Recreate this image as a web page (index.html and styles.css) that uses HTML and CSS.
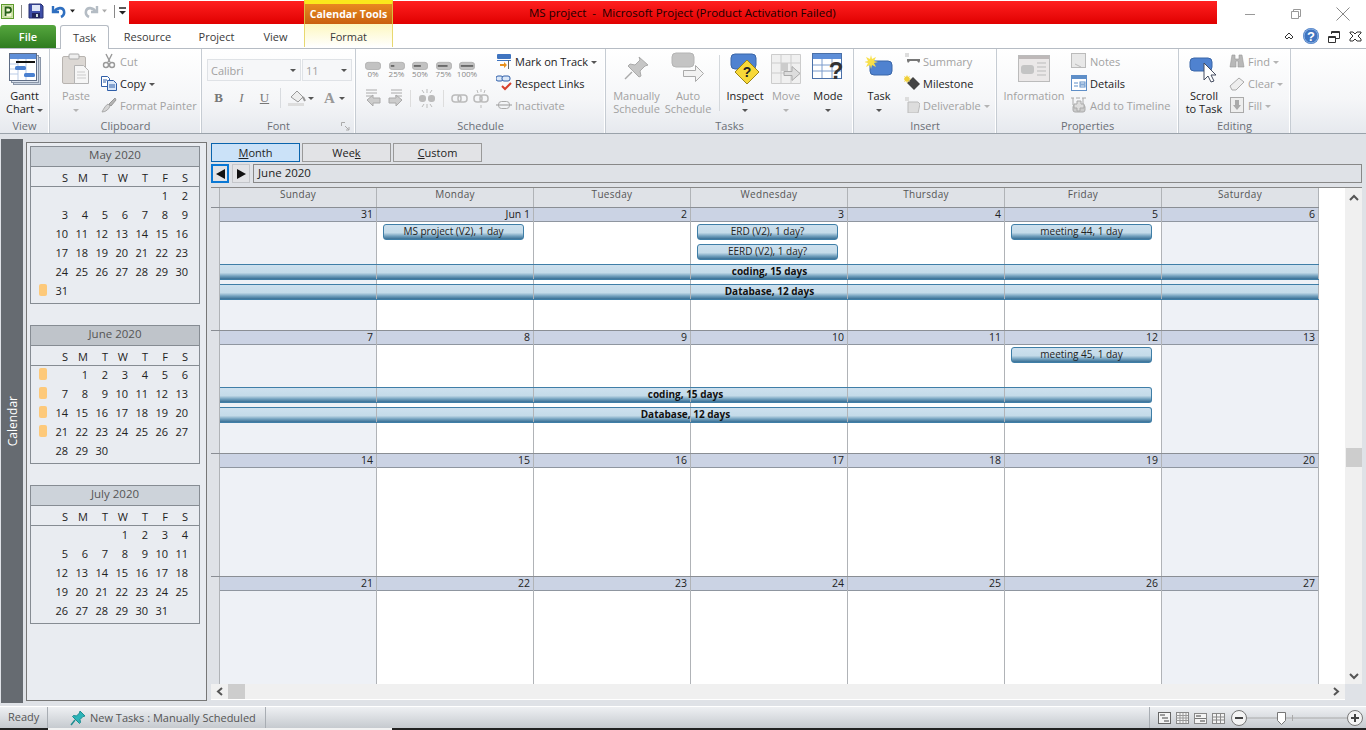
FILE: index.html
```html
<!DOCTYPE html>
<html>
<head>
  <title>MS project - Microsoft Project</title>
  <link rel="stylesheet" href="styles.css">
</head>
<body>
  <div id="titlebar">
    <div id="qat">
      <svg width="128" height="24" viewBox="0 0 128 24">
        <rect x="1.500" y="4.500" width="12" height="14" fill="#e4f0c8" stroke="#5c9a2c"/><rect x="3" y="6" width="9" height="11" fill="#f6f8d8" stroke="#7ab040" stroke-width=".5"/>
        <path d="M5.500 16V7.500h3a2.400 2.400 0 0 1 0 5h-3" fill="none" stroke="#27601a" stroke-width="1.800"/>
        <path d="M21.500 5v13" stroke="#888"/>
        <path d="M29 4h12l2 2v12H29z" fill="#3e4fa8" stroke="#28306e"/><rect x="32" y="5" width="8" height="6" fill="#dfe6f6"/><rect x="32" y="13" width="8" height="5" fill="#20245c"/><rect x="36" y="14" width="2" height="3" fill="#cdd"/>
        <path d="M53 6v6h6" fill="none" stroke="#2f6fc0" stroke-width="2.400"/><path d="M54 12c3-5 9-5 10-1 .7 3-1 5-3 6" fill="none" stroke="#2f6fc0" stroke-width="2.600"/>
        <path d="M70 9.500h5l-2.500 3z" fill="#222"/>
        <path d="M97 6v6h-6" fill="none" stroke="#b4bcc4" stroke-width="2.400"/><path d="M96 12c-3-5-9-5-10-1-.7 3 1 5 3 6" fill="none" stroke="#b4bcc4" stroke-width="2.600"/>
        <path d="M102 9.500h5l-2.500 3z" fill="#aaa"/>
        <path d="M114.500 5v13" stroke="#888"/>
        <path d="M119 8h7" stroke="#222" stroke-width="1.500"/><path d="M119 11h7l-3.500 3.500z" fill="#222"/>
      </svg>
    </div>
    <div id="redbar">
      <div class="context-head">Calendar Tools</div>
      <div class="doc-title">MS project &nbsp;-&nbsp; Microsoft Project (Product Activation Failed)</div>
    </div>
    <div id="winbtns">
      <svg width="149" height="24" viewBox="0 0 149 24">
        <path d="M28 14.500h10" stroke="#999"/>
        <path d="M74.500 11.500h7v7h-7zM76.500 11V9.500h7v7H82" fill="none" stroke="#999"/>
        <path d="M119.500 9.500l13 13M132.500 9.500l-13 13" stroke="#888" fill="none" transform="translate(0 -2)"/>
      </svg>
    </div>
  </div>

  <div id="tabs">
    <div class="tab tab-file">File</div>
    <div class="tab tab-active">Task</div>
    <div class="tab tab-resource">Resource</div>
    <div class="tab tab-project">Project</div>
    <div class="tab tab-view">View</div>
    <div class="tab tab-format">Format</div>
    <div class="tab-icons">
      <svg width="85" height="24" viewBox="0 0 85 24">
        <path d="M4 13l4-4 4 4-2 2-2-2-2 2z" fill="#fff" stroke="#333"/>
        <circle cx="30" cy="12" r="8" fill="#3f74c0"/><circle cx="30" cy="12" r="7" fill="none" stroke="#8fb4e4"/>
        <text x="30" y="16.500" class="help-mark">?</text>
        <path d="M47.500 12.500h7v6h-7zM50.500 10V7.500h8v7H55" fill="none" stroke="#333"/><path d="M47.500 13.500h7M50.500 8.500h8" stroke="#333"/>
        <path d="M69 8h3l2 2 2-2h4v1l-3 3 3 3v2h-4l-2-2-2 2h-3v-2l3-3-3-3z" fill="#fff" stroke="#333"/>
      </svg>
    </div>
  </div>

  <div id="ribbon">
    <div class="group g-view">
      <div class="tools">
        <div class="big w49">
          <svg class="big-icon" width="34" height="34" viewBox="0 0 34 34">
            <rect x="5.500" y="5.500" width="27" height="27" fill="#c8d2e0" stroke="#8a96a8"/>
            <rect x="3.500" y="3.500" width="27" height="27" fill="#dbe3ee" stroke="#8a96a8"/>
            <rect x="1.500" y="1.500" width="27" height="27" fill="#fff" stroke="#5e6c84"/>
            <rect x="2" y="2" width="26" height="5" fill="#5f8fd8"/><path d="M2 12h8M2 17h8M2 22h8M10 7v21M18 7v21" stroke="#b9cbe6"/>
            <rect x="8" y="9" width="19" height="2" fill="#111"/>
            <rect x="7" y="14" width="11" height="4" rx="1.500" fill="#4a80d0"/><rect x="16" y="21" width="11" height="4" rx="1.500" fill="#4a80d0"/>
          </svg>
          <div class="big-label">Gantt<br>Chart <i class="caret"></i></div>
        </div>
      </div>
      <div class="group-name">View</div>
    </div>

    <div class="group g-clip">
      <div class="tools">
        <div class="big w52 off">
          <svg class="big-icon" width="30" height="34" viewBox="0 0 30 34">
            <rect x="1.500" y="4.500" width="23" height="27" rx="1.500" fill="#dcd8d4" stroke="#b8b4b0"/>
            <rect x="8" y="2" width="10" height="5" rx="1" fill="#eee" stroke="#aaa"/>
            <path d="M13.500 13.500h9l5 5v13h-14z" fill="#f6f6f6" stroke="#b4b4b4"/>
            <path d="M16 20h8M16 23h9M16 26h9" stroke="#ccc"/>
          </svg>
          <div class="big-label">Paste<br><i class="caret"></i></div>
        </div>
        <div class="small-col clip-col">
          <div class="small off"><svg width="16" height="16" viewBox="0 0 16 16"><path d="M5 1l4 8M11 1L7 9" stroke="#999" stroke-width="1.400"/><circle cx="5" cy="12" r="2.500" fill="none" stroke="#999" stroke-width="1.400"/><circle cx="11" cy="12" r="2.500" fill="none" stroke="#999" stroke-width="1.400"/></svg><span>Cut</span></div>
          <div class="small"><svg width="16" height="16" viewBox="0 0 16 16"><path d="M.5 1.500h6l2 2v8h-8z" fill="#fff" stroke="#2f5ea8"/><path d="M6.500 5.500h6l3 3v7h-9z" fill="#dbe8f8" stroke="#2f5ea8"/><path d="M2 5h4M2 7h3M8 10h6M8 12h6" stroke="#2f5ea8"/></svg><span>Copy <i class="caret"></i></span></div>
          <div class="small off"><svg width="16" height="16" viewBox="0 0 16 16"><path d="M1 15c4 0 7-3 8-6L7 7c-2 1-4 4-6 8z" fill="#d4d4d4" stroke="#aaa"/><path d="M8 7l6-6 1 2-5 6z" fill="#b4b4b4" stroke="#999"/></svg><span>Format Painter</span></div>
        </div>
      </div>
      <div class="group-name">Clipboard</div>
    </div>

    <div class="group g-font">
      <div class="tools font-tools">
        <div class="combos">
          <div class="combo c-name"><span>Calibri</span><i class="caret"></i></div>
          <div class="combo c-size"><span>11</span><i class="caret"></i></div>
        </div>
        <div class="font-btns">
          <b class="fb">B</b><em class="fb">I</em><u class="fb">U</u>
          <span class="vsep"></span>
          <svg width="24" height="18" viewBox="0 0 24 18"><path d="M4 8l6-6 6 6-5 5z" fill="#eee" stroke="#999"/><path d="M16 8l2 4" stroke="#999" stroke-width="2"/><rect x="1" y="14" width="16" height="3" fill="#ddd"/></svg>
          <i class="caret cf"></i>
          <span class="font-a">A</span><i class="caret"></i>
        </div>
      </div>
      <div class="group-name">Font
        <svg class="launcher" width="9" height="9" viewBox="0 0 9 9"><path d="M.5 4V.5H4M4 4l4 4M8 5v3H5" fill="none" stroke="#aaa"/></svg>
      </div>
    </div>

    <div class="group g-sched">
      <div class="tools">
        <div class="sched-left">
          <div class="pills">
            <div class="pill"><svg width="16" height="9" viewBox="0 0 18 10" preserveAspectRatio="none"><rect x=".5" y="1.500" width="17" height="8" rx="3" fill="#c2c2c2" stroke="#b0b0b0"/></svg><span>0%</span></div>
            <div class="pill"><svg width="16" height="9" viewBox="0 0 18 10" preserveAspectRatio="none"><rect x=".5" y="1.500" width="17" height="8" rx="3" fill="#c2c2c2" stroke="#b0b0b0"/><path d="M2 5.500h4" stroke="#666" stroke-width="2"/></svg><span>25%</span></div>
            <div class="pill"><svg width="16" height="9" viewBox="0 0 18 10" preserveAspectRatio="none"><rect x=".5" y="1.500" width="17" height="8" rx="3" fill="#c2c2c2" stroke="#b0b0b0"/><path d="M2 5.500h8" stroke="#666" stroke-width="2"/></svg><span>50%</span></div>
            <div class="pill"><svg width="16" height="9" viewBox="0 0 18 10" preserveAspectRatio="none"><rect x=".5" y="1.500" width="17" height="8" rx="3" fill="#c2c2c2" stroke="#b0b0b0"/><path d="M2 5.500h11" stroke="#666" stroke-width="2"/></svg><span>75%</span></div>
            <div class="pill"><svg width="16" height="9" viewBox="0 0 18 10" preserveAspectRatio="none"><rect x=".5" y="1.500" width="17" height="8" rx="3" fill="#c2c2c2" stroke="#b0b0b0"/><path d="M2 5.500h14" stroke="#666" stroke-width="2"/></svg><span>100%</span></div>
          </div>
          <div class="sched-row">
            <svg width="124" height="20" viewBox="0 0 124 20">
              <path d="M1 1h11M1 4h11M1 7h7" stroke="#aaa"/><path d="M2 11l6-5v3h7v5H8v3z" fill="#ccc" stroke="#aaa"/>
              <path d="M26 1h11M26 4h11M30 7h7" stroke="#aaa"/><path d="M37 11l-6-5v3h-7v5h7v3z" fill="#ccc" stroke="#aaa"/>
              <path d="M45.500 1v17" stroke="#ddd"/>
              <rect x="54" y="6" width="7" height="7" rx="3" fill="#bbb"/><rect x="63" y="6" width="7" height="7" rx="3" fill="#bbb"/><path d="M57 1l2 3M67 1l-2 3M57 18l2-3M67 18l-2-3M62 0v4M62 15v4" stroke="#bbb"/>
              <path d="M78.500 1v17" stroke="#ddd"/>
              <rect x="87" y="6" width="9" height="7" rx="3" fill="none" stroke="#bbb" stroke-width="1.500"/><rect x="93" y="6" width="9" height="7" rx="3" fill="none" stroke="#bbb" stroke-width="1.500"/>
              <rect x="109" y="6" width="8" height="7" rx="3" fill="none" stroke="#bbb" stroke-width="1.500"/><rect x="115" y="6" width="8" height="7" rx="3" fill="none" stroke="#bbb" stroke-width="1.500"/><path d="M116 0v3M112 1l1 3M120 1l-1 3M116 19v-3" stroke="#bbb"/>
            </svg>
          </div>
        </div>
        <div class="small-col sched-col">
          <div class="small"><svg width="16" height="16" viewBox="0 0 16 16"><rect x="1" y="1" width="14" height="5" rx="1" fill="#3f74c0"/><path d="M1 7.500h14" stroke="#3f74c0"/><path d="M4 11h4V9l3 3-3 3v-2H4z" fill="#e8901c"/><path d="M12.500 7v9" stroke="#666"/></svg><span>Mark on Track <i class="caret"></i></span></div>
          <div class="small"><svg width="16" height="16" viewBox="0 0 16 16"><rect x="0" y="1" width="7" height="5" rx="2" fill="#dbe8f8" stroke="#2f5ea8"/><rect x="6" y="1" width="8" height="5" rx="2" fill="#dbe8f8" stroke="#2f5ea8"/><path d="M6 11l3 3 6-6" fill="none" stroke="#d8402c" stroke-width="2"/></svg><span>Respect Links</span></div>
          <div class="small off"><svg width="16" height="16" viewBox="0 0 16 16"><rect x="2.500" y="4.500" width="11" height="7" rx="3" fill="none" stroke="#aaa"/><path d="M0 8h16" stroke="#999"/></svg><span>Inactivate</span></div>
        </div>
      </div>
      <div class="group-name">Schedule</div>
    </div>

    <div class="group g-tasks">
      <div class="tools">
        <div class="big w51 off">
          <svg class="big-icon" width="28" height="28" viewBox="0 0 28 28"><path d="M16 2l9 8-3 1-5 5 1 5-2 1-11-11 2-2 5 1 5-5z" fill="#c6c6c6" stroke="#aaa"/><path d="M9 17l-7 7" stroke="#aaa" stroke-width="1.500"/></svg>
          <div class="big-label">Manually<br>Schedule</div>
        </div>
        <div class="big w52 off">
          <svg class="big-icon" width="34" height="34" viewBox="0 0 34 34"><rect x="1" y="1" width="22" height="14" rx="4" fill="#c4c4c4" stroke="#b4b4b4"/><path d="M12.500 18.500h12v-5l8 8-8 8v-5h-12z" fill="#f2f2f2" stroke="#aaa"/></svg>
          <div class="big-label">Auto<br>Schedule</div>
        </div>
        <span class="big-sep"></span>
        <div class="big w50">
          <svg class="big-icon" width="32" height="34" viewBox="0 0 32 34"><rect x="2" y="2" width="25" height="15" rx="4" fill="#4f82d0" stroke="#3a66a8"/><path d="M18 8l12 12-12 12L6 20z" fill="#f8d838" stroke="#9c8418"/><text x="18" y="25" class="warn-mark">?</text></svg>
          <div class="big-label">Inspect<br><i class="caret"></i></div>
        </div>
        <div class="big w32 off">
          <svg class="big-icon" width="32" height="32" viewBox="0 0 32 32"><path d="M1.500 1.500h29v29h-29zM1.500 10h29M1.500 20h29M11 1.500v29M21 1.500v29" fill="#f0f0f0" stroke="#ccc"/><rect x="11" y="10" width="7" height="8" fill="#ccc"/><path d="M14 18.500h8v-5l8 7-8 7v-5h-8z" fill="#ddd" stroke="#aaa"/></svg>
          <div class="big-label">Move<br><i class="caret"></i></div>
        </div>
        <div class="big w52">
          <svg class="big-icon" width="32" height="34" viewBox="0 0 32 34"><rect x=".5" y="1.500" width="29" height="25" fill="#fff" stroke="#4a70a8"/><rect x="1" y="2" width="28" height="5" fill="#5f8fd8"/><path d="M1 13h28M1 19h28M10 7v19M20 7v19" stroke="#7c9ccc"/><text x="24" y="27" class="mode-mark">?</text></svg>
          <div class="big-label">Mode<br><i class="caret"></i></div>
        </div>
      </div>
      <div class="group-name">Tasks</div>
    </div>

    <div class="group g-insert">
      <div class="tools">
        <div class="big w50">
          <svg class="big-icon" width="28" height="28" viewBox="0 0 28 28"><rect x="5" y="6" width="22" height="14" rx="4" fill="#4f82d0" stroke="#3a66a8"/><path d="M6 0l1 4 4-2-2 4 4 1-4 1 2 4-4-2-1 4-1-4-4 2 2-4-4-1 4-1-2-4 4 2z" fill="#f8e048"/></svg>
          <div class="big-label">Task<br><i class="caret"></i></div>
        </div>
        <div class="small-col">
          <div class="small off"><svg width="16" height="16" viewBox="0 0 16 16"><path d="M1 0h4v4H1z" fill="#ddd"/><path d="M3 6h13v2l-1 2-2-2H6l-2 2-1-2z" fill="#777"/></svg><span>Summary</span></div>
          <div class="small"><svg width="16" height="16" viewBox="0 0 16 16"><path d="M9 2l7 7-6 6-7-7z" fill="#444"/><path d="M3 0l1 2 2-1-1 2 2 1-2 1 1 2-2-1-1 2-1-2-2 1 1-2-2-1 2-1-1-2 2 1z" fill="#f0d038"/></svg><span>Milestone</span></div>
          <div class="small off"><svg width="16" height="16" viewBox="0 0 16 16"><path d="M4 5h10l2 2-2 9H4z" fill="#ddd" stroke="#bbb"/><path d="M1 0h4v4H1z" fill="#ddd"/></svg><span>Deliverable <i class="caret"></i></span></div>
        </div>
      </div>
      <div class="group-name">Insert</div>
    </div>

    <div class="group g-props">
      <div class="tools">
        <div class="big w74 off">
          <svg class="big-icon" width="32" height="28" viewBox="0 0 32 28"><rect x=".5" y=".5" width="31" height="26" fill="#ebe8e8" stroke="#bbb"/><rect x="1" y="1" width="30" height="3" fill="#bdb8b8"/><rect x="3" y="10" width="13" height="9" rx="3" fill="#c4c4c4"/><path d="M19 8h9M19 12h9M19 16h9M19 20h9" stroke="#bbb"/></svg>
          <div class="big-label">Information</div>
        </div>
        <div class="small-col">
          <div class="small off"><svg width="16" height="16" viewBox="0 0 16 16"><rect x=".5" y=".5" width="14" height="14" fill="#e8e8e8" stroke="#bbb"/><path d="M4 11l6 3" stroke="#bbb"/></svg><span>Notes</span></div>
          <div class="small"><svg width="16" height="16" viewBox="0 0 16 16"><rect x=".5" y=".5" width="15" height="15" fill="#fff" stroke="#5f8fc8"/><rect x="1" y="1" width="14" height="3" fill="#5f8fc8"/><path d="M3 8h4M3 11h4" stroke="#5f8fc8"/><rect x="9" y="7" width="5" height="2" fill="none" stroke="#5f8fc8"/><rect x="9" y="10" width="5" height="2" fill="none" stroke="#5f8fc8"/></svg><span>Details</span></div>
          <div class="small off"><svg width="16" height="16" viewBox="0 0 16 16"><path d="M0 1h3M5 1h4M11 1h4M2 1v7M12 1v7" stroke="#aaa"/><rect x="2" y="8" width="12" height="7" rx="2" fill="#ccc" stroke="#aaa"/><path d="M6 4h4v3h3v4H9v3H6v-3H3V7h3z" fill="#ddd" stroke="#aaa"/></svg><span>Add to Timeline</span></div>
        </div>
      </div>
      <div class="group-name">Properties</div>
    </div>

    <div class="group g-edit">
      <div class="tools">
        <div class="big w50">
          <svg class="big-icon" width="30" height="30" viewBox="0 0 30 30"><rect x="1" y="4" width="22" height="13" rx="4" fill="#4f82d0" stroke="#3a66a8"/><path d="M15 9v17l4-4 3 6 3-1-3-6h5z" fill="#fff" stroke="#444c60"/></svg>
          <div class="big-label">Scroll<br>to Task</div>
        </div>
        <div class="small-col">
          <div class="small off"><svg width="16" height="16" viewBox="0 0 16 16"><path d="M3 2h3v4h4V2h3l2 12H9V8H7v6H1z" fill="#b8b8b8" stroke="#999" stroke-width=".6"/></svg><span>Find <i class="caret"></i></span></div>
          <div class="small off"><svg width="16" height="16" viewBox="0 0 16 16"><path d="M1 11l9-8 5 4-8 8H3z" fill="#eee" stroke="#aaa"/></svg><span>Clear <i class="caret"></i></span></div>
          <div class="small off"><svg width="16" height="16" viewBox="0 0 16 16"><rect x="1.500" y=".5" width="13" height="15" fill="#eee" stroke="#aaa"/><path d="M6 3h4v5h2l-4 5-4-5h2z" fill="#aaa"/></svg><span>Fill <i class="caret"></i></span></div>
        </div>
      </div>
      <div class="group-name">Editing</div>
    </div>
  </div>

  <div id="content">
    <div id="viewbar"><span>Calendar</span></div>

    <div id="minis">
      <div class="mini">
        <div class="mini-head">May 2020</div>
        <div class="mini-row mini-dow"><i></i><span>S</span><span>M</span><span>T</span><span>W</span><span>T</span><span>F</span><span>S</span></div>
        <div class="mini-body">
          <div class="mini-row"><i></i><span></span><span></span><span></span><span></span><span></span><span>1</span><span>2</span></div>
          <div class="mini-row"><i></i><span>3</span><span>4</span><span>5</span><span>6</span><span>7</span><span>8</span><span>9</span></div>
          <div class="mini-row"><i></i><span>10</span><span>11</span><span>12</span><span>13</span><span>14</span><span>15</span><span>16</span></div>
          <div class="mini-row"><i></i><span>17</span><span>18</span><span>19</span><span>20</span><span>21</span><span>22</span><span>23</span></div>
          <div class="mini-row"><i></i><span>24</span><span>25</span><span>26</span><span>27</span><span>28</span><span>29</span><span>30</span></div>
          <div class="mini-row"><i class="mark"></i><span>31</span></div>
        </div>
      </div>
      <div class="mini current">
        <div class="mini-head">June 2020</div>
        <div class="mini-row mini-dow"><i></i><span>S</span><span>M</span><span>T</span><span>W</span><span>T</span><span>F</span><span>S</span></div>
        <div class="mini-body">
          <div class="mini-row"><i class="mark"></i><span></span><span>1</span><span>2</span><span>3</span><span>4</span><span>5</span><span>6</span></div>
          <div class="mini-row"><i class="mark"></i><span>7</span><span>8</span><span>9</span><span>10</span><span>11</span><span>12</span><span>13</span></div>
          <div class="mini-row"><i class="mark"></i><span>14</span><span>15</span><span>16</span><span>17</span><span>18</span><span>19</span><span>20</span></div>
          <div class="mini-row"><i class="mark"></i><span>21</span><span>22</span><span>23</span><span>24</span><span>25</span><span>26</span><span>27</span></div>
          <div class="mini-row"><i></i><span>28</span><span>29</span><span>30</span></div>
        </div>
      </div>
      <div class="mini">
        <div class="mini-head">July 2020</div>
        <div class="mini-row mini-dow"><i></i><span>S</span><span>M</span><span>T</span><span>W</span><span>T</span><span>F</span><span>S</span></div>
        <div class="mini-body">
          <div class="mini-row"><i></i><span></span><span></span><span></span><span>1</span><span>2</span><span>3</span><span>4</span></div>
          <div class="mini-row"><i></i><span>5</span><span>6</span><span>7</span><span>8</span><span>9</span><span>10</span><span>11</span></div>
          <div class="mini-row"><i></i><span>12</span><span>13</span><span>14</span><span>15</span><span>16</span><span>17</span><span>18</span></div>
          <div class="mini-row"><i></i><span>19</span><span>20</span><span>21</span><span>22</span><span>23</span><span>24</span><span>25</span></div>
          <div class="mini-row"><i></i><span>26</span><span>27</span><span>28</span><span>29</span><span>30</span><span>31</span></div>
        </div>
      </div>
    </div>

    <div id="calview">
      <div id="view-btns">
        <div class="vbtn vbtn-on"><u>M</u>onth</div>
        <div class="vbtn">Wee<u>k</u></div>
        <div class="vbtn"><u>C</u>ustom</div>
      </div>
      <div id="nav">
        <div class="navbtn navbtn-focus"><i class="tri-left"></i></div>
        <div class="navbtn"><i class="tri-right"></i></div>
        <div id="nav-title">June 2020</div>
      </div>
      <div id="grid-wrap">
        <div id="grid">
          <div class="day-heads">
            <div class="corner"></div>
            <div>Sunday</div><div>Monday</div><div>Tuesday</div><div>Wednesday</div><div>Thursday</div><div>Friday</div><div>Saturday</div>
          </div>

          <div class="week-row">
            <div class="gutter"></div>
            <div class="week">
              <div class="cell c1 weekend"><div class="date">31</div></div>
              <div class="cell c2"><div class="date">Jun 1</div></div>
              <div class="cell c3"><div class="date">2</div></div>
              <div class="cell c4"><div class="date">3</div></div>
              <div class="cell c5"><div class="date">4</div></div>
              <div class="cell c6"><div class="date">5</div></div>
              <div class="cell c7 weekend"><div class="date">6</div></div>
              <div class="bar one c2 r1">MS project (V2), 1 day</div>
              <div class="bar one c4 r1">ERD (V2), 1 day?</div>
              <div class="bar one c6 r1">meeting 44, 1 day</div>
              <div class="bar one c4 r2">EERD (V2), 1 day?</div>
              <div class="bar span-all r3">coding, 15 days</div>
              <div class="bar span-all r4">Database, 12 days</div>
            </div>
          </div>

          <div class="week-row">
            <div class="gutter"></div>
            <div class="week">
              <div class="cell c1 weekend"><div class="date">7</div></div>
              <div class="cell c2"><div class="date">8</div></div>
              <div class="cell c3"><div class="date">9</div></div>
              <div class="cell c4"><div class="date">10</div></div>
              <div class="cell c5"><div class="date">11</div></div>
              <div class="cell c6"><div class="date">12</div></div>
              <div class="cell c7 weekend"><div class="date">13</div></div>
              <div class="bar one c6 r1">meeting 45, 1 day</div>
              <div class="bar span-end r3">coding, 15 days</div>
              <div class="bar span-end r4">Database, 12 days</div>
            </div>
          </div>

          <div class="week-row">
            <div class="gutter"></div>
            <div class="week">
              <div class="cell c1 weekend"><div class="date">14</div></div>
              <div class="cell c2"><div class="date">15</div></div>
              <div class="cell c3"><div class="date">16</div></div>
              <div class="cell c4"><div class="date">17</div></div>
              <div class="cell c5"><div class="date">18</div></div>
              <div class="cell c6"><div class="date">19</div></div>
              <div class="cell c7 weekend"><div class="date">20</div></div>
            </div>
          </div>

          <div class="week-row">
            <div class="gutter"></div>
            <div class="week">
              <div class="cell c1 weekend"><div class="date">21</div></div>
              <div class="cell c2"><div class="date">22</div></div>
              <div class="cell c3"><div class="date">23</div></div>
              <div class="cell c4"><div class="date">24</div></div>
              <div class="cell c5"><div class="date">25</div></div>
              <div class="cell c6"><div class="date">26</div></div>
              <div class="cell c7 weekend"><div class="date">27</div></div>
            </div>
          </div>
        </div>
        <div id="vscroll">
          <svg class="sb-arrow" width="16" height="16" viewBox="0 0 16 16"><path d="M4 10l4-4 4 4" fill="none" stroke="#555" stroke-width="2"/></svg>
          <div class="v-thumb"></div>
          <svg class="sb-arrow sb-end" width="16" height="16" viewBox="0 0 16 16"><path d="M4 6l4 4 4-4" fill="none" stroke="#555" stroke-width="2"/></svg>
        </div>
      </div>
      <div id="hscroll">
        <svg width="17" height="15" viewBox="0 0 17 15"><path d="M11 4L7 7.500l4 3.500" fill="none" stroke="#555" stroke-width="2"/></svg>
        <div class="h-thumb"></div>
        <svg class="sb-end-h" width="17" height="15" viewBox="0 0 17 15"><path d="M6 4l4 3.500L6 11" fill="none" stroke="#555" stroke-width="2"/></svg>
      </div>
    </div>
  </div>

  <div id="statusbar">
    <div class="st-ready">Ready</div>
    <div class="st-mode">
      <svg width="16" height="16" viewBox="0 0 16 16"><path d="M10 1l5 5-2 .5-3 3 .5 3-1 1-7-7 1-1 3 .5 3-3z" fill="#2cb4b8" stroke="#1c8c90"/><path d="M5 10l-4 5" stroke="#1c8c90" stroke-width="1.500"/></svg>
      <span>New Tasks : Manually Scheduled</span>
    </div>
    <div class="st-right">
      <svg width="80" height="16" viewBox="0 0 80 16">
        <rect x="8.500" y="2.500" width="12" height="11" fill="#f4f4f4" stroke="#666"/><path d="M10 5h5M12 8h6M14 11h5" stroke="#444"/>
        <rect x="26.500" y="2.500" width="12" height="11" fill="#f4f4f4" stroke="#888"/><path d="M26 5.500h12M26 8h12M26 10.500h12M30 3v10M33 3v10M36 3v10" stroke="#999"/>
        <rect x="44.500" y="3.500" width="12" height="10" fill="#f4f4f4" stroke="#888"/><path d="M45 8.500h11" stroke="#777"/><rect x="46" y="5" width="5" height="2" fill="#999"/><rect x="50" y="10" width="5" height="2" fill="#999"/>
        <rect x="62.500" y="3.500" width="12" height="10" fill="#f4f4f4" stroke="#888"/><path d="M63 7h11M63 10h11M66.500 4v9M70.500 4v9" stroke="#888"/>
      </svg>
      <svg width="134" height="18" viewBox="0 0 134 18">
        <circle cx="9" cy="9" r="7.500" fill="#f4f4f4" stroke="#777"/><path d="M5 9h8" stroke="#444" stroke-width="2"/>
        <path d="M17 9h100" stroke="#aaa"/><path d="M62.500 6v6" stroke="#aaa"/>
        <path d="M47.500 3.500h8v8l-4 4-4-4z" fill="#fff" stroke="#777"/>
        <circle cx="125" cy="9" r="7.500" fill="#f4f4f4" stroke="#777"/><path d="M121 9h8M125 5v8" stroke="#444" stroke-width="2"/>
      </svg>
    </div>
  </div>
  <div id="taskstrip"></div>
</body>
</html>
```
FILE: styles.css
```css
html, body {
  margin: 0;
  height: 730px;
  overflow: hidden;
}
body {
  font-family: "Open Sans", "Noto Sans", sans-serif;
  font-size: 11px;
  color: #222;
  background: #fff;
  display: flex;
  flex-direction: column;
}
i { font-style: normal; }

/* title bar */
#titlebar {
  display: flex;
  height: 24px;
  flex: none;
}
#qat { width: 129px; flex: none; }
#redbar {
  width: 1088px;
  height: 23px;
  margin-top: 1px;
  display: flex;
  background: linear-gradient(#ff2020, #e00000);
  padding-left: 175px;
  box-sizing: border-box;
}
.context-head {
  width: 89px;
  height: 24px;
  margin-top: -1px;
  box-sizing: border-box;
  border-top: 4px solid #fbe91c;
  border-left: 1px solid #d8c040;
  border-right: 1px solid #d8c040;
  background: linear-gradient(#e88a20, #c9600f);
  color: #fff;
  font-weight: 700;
  font-size: 10.5px;
  text-align: center;
  line-height: 20px;
}
.doc-title {
  margin-left: 136px;
  font-size: 11.5px;
  line-height: 23px;
  color: #200000;
  white-space: nowrap;
}
#winbtns { width: 149px; }

/* tabs */
#tabs {
  display: flex;
  height: 24px;
  flex: none;
  position: relative;
  z-index: 1;
  font-size: 11px;
}
.tab {
  text-align: center;
  line-height: 26px;
  color: #3a3a3a;
  box-sizing: border-box;
}
.tab-file {
  width: 56px;
  height: 23px;
  margin-top: 1px;
  margin-right: 4px;
  line-height: 23px;
  border-radius: 3px 3px 0 0;
  background: linear-gradient(#55a63e, #2f7c20);
  color: #fff;
  font-weight: 600;
}
.tab-active {
  width: 49px;
  height: 24px;
  margin-top: 1px;
  border: 1px solid #b6bcc4;
  border-bottom: 0;
  border-radius: 3px 3px 0 0;
  background: #fff;
  line-height: 24px;
}
.tab-resource { width: 77px; }
.tab-project { width: 61px; }
.tab-view { width: 57px; }
.tab-format {
  width: 89px;
  border-left: 1px solid #e8d870;
  border-right: 1px solid #e8d870;
  height: 23px;
  background: linear-gradient(#fdf8c0, #fff);
}
.tab-icons { margin-left: 888px; width: 85px; }
.help-mark {
  fill: #fff;
  font-family: "Liberation Sans", sans-serif;
  font-size: 13px;
  font-weight: 700;
  text-anchor: middle;
}

/* ribbon */
#ribbon {
  display: flex;
  height: 86px;
  flex: none;
  box-sizing: border-box;
  border-top: 1px solid #b6bcc4;
  border-bottom: 1px solid #9aa2aa;
  background: linear-gradient(#fff, #f5f6f8 60%, #e6e9ee);
}
.group {
  display: flex;
  flex-direction: column;
  box-sizing: border-box;
  border-right: 1px solid #c6ccd3;
  box-shadow: inset -1px 0 0 #fff;
}
.g-view { width: 50px; }
.g-clip { width: 152px; }
.g-font { width: 154px; }
.g-sched { width: 250px; }
.g-tasks { width: 248px; }
.g-insert { width: 143px; }
.g-props { width: 182px; }
.g-edit { width: 112px; }
.tools {
  display: flex;
  height: 70px;
}
.group-name {
  height: 14px;
  line-height: 14px;
  text-align: center;
  color: #6a6f76;
  position: relative;
}
.launcher {
  position: absolute;
  right: 5px;
  top: 3px;
}
.big {
  flex: none;
  display: flex;
  flex-direction: column;
  align-items: center;
}
.big-icon {
  height: 36px;
  margin-top: 2px;
  flex: none;
}
.big-label {
  margin-top: 2px;
  line-height: 13px;
  text-align: center;
  white-space: nowrap;
}
.off, .off .big-label { color: #a2a2a2; }
.w49 { width: 49px; }
.w52 { width: 52px; }
.w51 { width: 51px; }
.w50 { width: 50px; }
.w32 { width: 32px; }
.w74 { width: 74px; }
.g-tasks .tools { padding-left: 5px; }
.big-sep {
  width: 1px;
  height: 56px;
  margin: 6px 0 0 5px;
  background: #d4d8dc;
  flex: none;
}
.caret {
  display: inline-block;
  width: 0;
  height: 0;
  border-left: 3px solid transparent;
  border-right: 3px solid transparent;
  border-top: 3px solid #555;
  vertical-align: middle;
}
.off .caret { border-top-color: #b4b4b4; }
.small-col {
  display: flex;
  flex-direction: column;
  padding-top: 1px;
}
.small {
  height: 22px;
  display: flex;
  align-items: center;
  gap: 3px;
  white-space: nowrap;
}
.small svg { flex: none; }
.clip-col { margin-left: -1px; }

/* font group */
.font-tools {
  flex-direction: column;
  padding: 10px 0 0 5px;
}
.combos { display: flex; gap: 1px; }
.combo {
  height: 22px;
  box-sizing: border-box;
  border: 1px solid #dfe2e6;
  background: #f6f7f9;
  display: flex;
  align-items: center;
  justify-content: space-between;
  padding: 0 4px 0 3px;
  color: #a0a0a0;
}
.c-name { width: 94px; }
.c-size { width: 50px; }
.font-btns {
  display: flex;
  align-items: center;
  margin-top: 7px;
  color: #777;
  height: 20px;
}
.fb {
  width: 23px;
  text-align: center;
  font-size: 13px;
  font-family: "Liberation Serif", serif;
}
.vsep {
  width: 1px;
  height: 20px;
  background: #d8dbdf;
  margin: 0 6px 0 4px;
}
.cf { margin-left: -3px; }
.font-a {
  margin-left: 10px;
  margin-right: 4px;
  font-family: "Liberation Serif", serif;
  font-weight: 700;
  font-size: 15px;
  color: #999;
}

/* schedule group */
.sched-left {
  width: 140px;
  padding-left: 8px;
  box-sizing: border-box;
  flex: none;
}
.pills {
  display: flex;
  gap: 5.5px;
  padding-top: 12px;
  height: 26px;
}
.pill {
  width: 18px;
  text-align: center;
  font-size: 8px;
  line-height: 8px;
  color: #888;
  display: flex;
  flex-direction: column;
  align-items: center;
}
.sched-row { margin-top: 2px; padding-left: 1px; }

.warn-mark {
  font-family: "Liberation Sans", sans-serif;
  font-size: 14px;
  font-weight: 700;
  fill: #222;
  text-anchor: middle;
}
.mode-mark {
  font-family: "Liberation Sans", sans-serif;
  font-size: 24px;
  font-weight: 700;
  fill: #333;
  text-anchor: middle;
}

/* content */
#content {
  flex: 1;
  display: flex;
  background: #dfe2e7;
  padding: 5px 4px 3px 1px;
  min-height: 0;
}
#viewbar {
  width: 22px;
  flex: none;
  background: #666b71;
  color: #fff;
  display: flex;
  align-items: center;
  justify-content: center;
}
#viewbar span {
  writing-mode: vertical-rl;
  transform: rotate(180deg);
  font-size: 12px;
}
#minis {
  width: 181px;
  flex: none;
  margin: 3px 0 2px 3px;
  box-sizing: border-box;
  border: 1px solid #777;
  background: #e9ecf1;
  padding: 3px 6px 0 3px;
  display: flex;
  flex-direction: column;
  gap: 21px;
}
.mini {
  width: 170px;
  box-sizing: border-box;
  border: 1px solid #868c93;
}
.mini-head {
  height: 20px;
  line-height: 16px;
  text-align: center;
  background: #cdd3da;
  border-bottom: 1px solid #868c93;
  box-sizing: border-box;
  color: #555;
  font-size: 11.5px;
}
.current .mini-head { background: #bfc4ca; }
.mini-row {
  display: flex;
  height: 19px;
  line-height: 17px;
  padding-left: 17px;
  position: relative;
}
.mini-row span {
  width: 20px;
  text-align: right;
  flex: none;
}
.mini-dow {
  height: 20px;
  line-height: 21px;
  box-sizing: border-box;
  border-bottom: 1px solid #868c93;
}
.mini-body { padding-bottom: 2px; }
.mini-row i { display: none; }
.mini-row .mark {
  display: block;
  position: absolute;
  left: 8px;
  top: 2px;
  width: 8px;
  height: 12px;
  border-radius: 2px;
  background: #fdc97a;
}

#calview {
  margin-left: 4px;
  width: 1151px;
  flex: none;
  display: flex;
  flex-direction: column;
}
#view-btns {
  display: flex;
  gap: 2px;
  margin-top: 4px;
  flex: none;
}
.vbtn {
  width: 89px;
  height: 19px;
  box-sizing: border-box;
  border: 1px solid #999;
  background: #e2e3e6;
  text-align: center;
  line-height: 17px;
}
.vbtn-on {
  background: #cbe2f8;
  border-color: #0a64ad;
}
#nav {
  display: flex;
  margin-top: 2px;
  gap: 3px;
  flex: none;
}
.navbtn {
  width: 18px;
  height: 19px;
  box-sizing: border-box;
  border: 1px solid #c4c6ca;
  background: #e2e3e6;
  display: flex;
  align-items: center;
  justify-content: center;
}
.navbtn-focus { border: 2px solid #0a78d4; }
.tri-left, .tri-right {
  width: 0;
  height: 0;
  border-top: 5px solid transparent;
  border-bottom: 5px solid transparent;
}
.tri-left { border-right: 9px solid #111; }
.tri-right { border-left: 9px solid #111; }
#nav-title {
  flex: 1;
  box-sizing: border-box;
  border: 1px solid #888;
  height: 19px;
  line-height: 15px;
  padding-left: 4px;
  font-size: 11.5px;
}

#grid-wrap {
  display: flex;
  margin-top: 4px;
  height: 497px;
  flex: none;
  border-top: 1px solid #888;
  box-sizing: border-box;
}
#grid {
  width: 1134px;
  background: #fff;
  overflow: hidden;
  flex: none;
}
.day-heads {
  display: flex;
  height: 19px;
  width: 1108px;
  background: #dfe2e7;
  color: #555;
  font-size: 10px;
  letter-spacing: .3px;
}
.day-heads div {
  width: 157px;
  box-sizing: border-box;
  border-right: 1px solid #b0b3b7;
  text-align: center;
  line-height: 13px;
}
.day-heads .corner { width: 9px; }
.week-row {
  display: flex;
  height: 123px;
  box-sizing: border-box;
  border-top: 1px solid #8a8e94;
  width: 1108px;
}
.gutter {
  width: 9px;
  flex: none;
  background: #dfe2e7;
  box-sizing: border-box;
  border-right: 1px solid #b0b3b7;
}
.week {
  display: grid;
  grid-template-columns: repeat(7, 157px);
  grid-template-rows: 16px 20px 20px 20px 20px 26px;
  width: 1099px;
}
.cell {
  grid-row: 1 / -1;
  box-sizing: border-box;
  border-right: 1px solid #b0b3b7;
  background: #fff;
}
.weekend { background: #eef1f6; }
.date {
  height: 14px;
  box-sizing: border-box;
  border-bottom: 1px solid #8f96a0;
  background: #cbd3e4;
  text-align: right;
  padding-right: 3px;
  line-height: 13px;
  font-size: 10.5px;
}
.c1 { grid-column: 1; }
.c2 { grid-column: 2; }
.c3 { grid-column: 3; }
.c4 { grid-column: 4; }
.c5 { grid-column: 5; }
.c6 { grid-column: 6; }
.c7 { grid-column: 7; }
.r1 { grid-row: 2; }
.r2 { grid-row: 3; }
.r3 { grid-row: 4; }
.r4 { grid-row: 5; }
.bar {
  height: 16px;
  box-sizing: border-box;
  text-align: center;
  line-height: 13px;
  font-size: 10px;
  white-space: nowrap;
  color: #222;
  border: 1px solid #3f7ea7;
  background: linear-gradient(#cde0ee, #c4dbe9 55%, #6f9ebc 80%, #3b7095);
}
.one {
  margin: 0 10px 0 6px;
  border-radius: 3px;
}
.span-all, .span-end {
  font-weight: 700;
  color: #111;
  background:
    repeating-linear-gradient(to right, transparent 0 156px, #b0b3b7 156px 157px),
    linear-gradient(#cde0ee, #c4dbe9 55%, #6f9ebc 80%, #3b7095);
  border-left: 0;
}
.span-all {
  grid-column: 1 / -1;
  border-right: 0;
}
.span-end {
  grid-column: 1 / span 6;
  margin-right: 10px;
  border-radius: 0 3px 3px 0;
}

/* scrollbars */
#vscroll {
  width: 17px;
  flex: none;
  background: #f0f0f0;
  display: flex;
  flex-direction: column;
  align-items: center;
}
.sb-arrow { flex: none; margin-top: 2px; }
.v-thumb {
  width: 16px;
  height: 19px;
  background: #cdcdcd;
  margin-top: 242px;
  flex: none;
}
.sb-end { margin-top: auto; }
#hscroll {
  height: 15px;
  flex: none;
  width: 1134px;
  background: #f0f0f0;
  display: flex;
  align-items: center;
  border-bottom: 1px solid #fff;
}
.h-thumb {
  width: 17px;
  height: 15px;
  background: #cdcdcd;
  flex: none;
}
.sb-end-h { margin-left: auto; }

/* status bar */
#statusbar {
  height: 22px;
  flex: none;
  box-sizing: border-box;
  border-top: 1px solid #fff;
  background: linear-gradient(#eef0f3, #c6cacf);
  display: flex;
  align-items: center;
  color: #555;
}
#taskstrip {
  height: 2px;
  flex: none;
  background: linear-gradient(to right, #222 48px, #f2f2f2 48px 392px, #222 392px);
}
.st-ready {
  width: 48px;
  padding-left: 8px;
  box-sizing: border-box;
  height: 100%;
  line-height: 20px;
  border-right: 1px solid #a8adb3;
}
.st-mode {
  width: 218px;
  height: 100%;
  box-sizing: border-box;
  padding-left: 22px;
  border-right: 1px solid #a8adb3;
  display: flex;
  align-items: center;
  gap: 4px;
}
.st-right {
  margin-left: auto;
  width: 217px;
  height: 100%;
  box-sizing: border-box;
  border-left: 1px solid #a8adb3;
  display: flex;
  align-items: center;
}
```
